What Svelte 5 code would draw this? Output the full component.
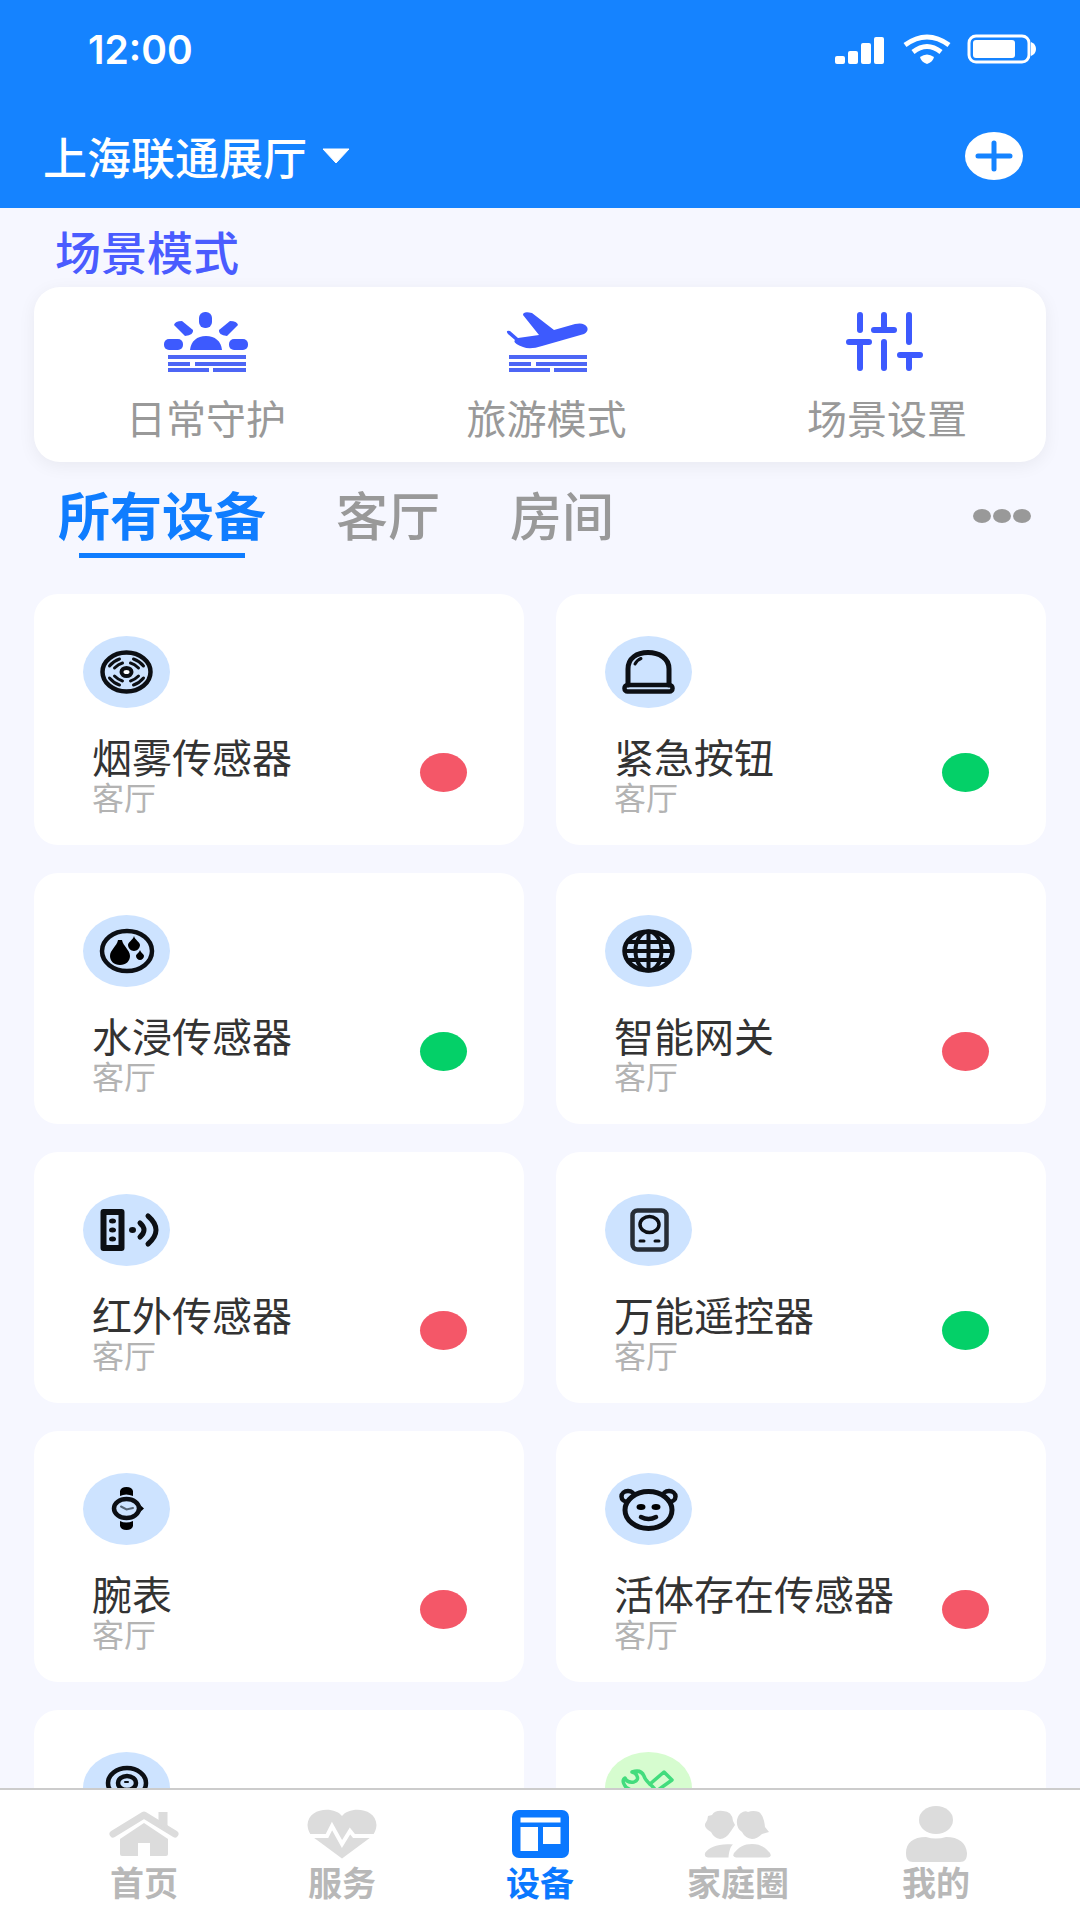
<script>
    let activeTab = 'all';
    let activePage = 'device';

    const tabs = [
        { id: 'all', title: '所有设备' },
        { id: 'living', title: '客厅' },
        { id: 'room', title: '房间' }
    ];

    const scenes = [
        { id: 'daily', title: '日常守护' },
        { id: 'travel', title: '旅游模式' },
        { id: 'settings', title: '场景设置' }
    ];

    const devices = [
        { id: 1, icon: 'smoke', name: '烟雾传感器', room: '客厅', online: false },
        { id: 2, icon: 'alarm', name: '紧急按钮', room: '客厅', online: true },
        { id: 3, icon: 'water', name: '水浸传感器', room: '客厅', online: true },
        { id: 4, icon: 'gateway', name: '智能网关', room: '客厅', online: false },
        { id: 5, icon: 'infrared', name: '红外传感器', room: '客厅', online: false },
        { id: 6, icon: 'remote', name: '万能遥控器', room: '客厅', online: true },
        { id: 7, icon: 'watch', name: '腕表', room: '客厅', online: false },
        { id: 8, icon: 'presence', name: '活体存在传感器', room: '客厅', online: false },
        { id: 9, icon: 'camera' },
        { id: 10, icon: 'tools' }
    ];

    const pages = [
        { id: 'home', title: '首页' },
        { id: 'service', title: '服务' },
        { id: 'device', title: '设备' },
        { id: 'family', title: '家庭圈' },
        { id: 'me', title: '我的' }
    ];
</script>

<div class="app">
    <header>
        <div class="status-bar">
            <span class="time">12:00</span>
            <svg class="status-icons" width="202" height="30" viewBox="0 0 202 30" fill="#fff" aria-hidden="true">
                <rect x="1" y="22" width="10" height="8" rx="2" />
                <rect x="14" y="17" width="10" height="13" rx="2" />
                <rect x="27" y="9" width="10" height="21" rx="2" />
                <rect x="40" y="3" width="10" height="27" rx="2" />
                <g fill="none" stroke="#fff" stroke-width="5">
                    <path d="M71 11Q93 -5 115 11" />
                    <path d="M79 18Q93 7 107 18" />
                </g>
                <path d="M86 23Q93 18 100 23Q99 28 93 30Q87 28 86 23Z" />
                <rect x="135" y="2" width="60" height="26" rx="7" fill="none" stroke="#fff" stroke-width="3" />
                <rect x="139" y="6" width="42" height="18" rx="3" />
                <path d="M197 8Q202 10 202 15T197 22Z" />
            </svg>
        </div>
        <div class="title-bar">
            <button class="location">
                上海联通展厅
                <svg width="28" height="16" viewBox="0 0 28 16" aria-hidden="true">
                    <path d="M1 1H27L14 15Z" fill="#fff" stroke="#fff" stroke-linejoin="round" />
                </svg>
            </button>
            <button class="add" aria-label="添加">
                <svg width="58" height="48" viewBox="0 0 58 48">
                    <ellipse cx="29" cy="24" rx="29" ry="24" fill="#fff" />
                    <path d="M29 11V37M13 24H45" stroke="#1583ff" stroke-width="5" stroke-linecap="round" />
                </svg>
            </button>
        </div>
    </header>

    <main>
        <h2>场景模式</h2>
        <section class="scenes">
            {#each scenes as scene (scene.id)}
                <button class="scene">
                    <svg width="84" height="60" viewBox="0 0 84 60" fill="#3d5afe" aria-hidden="true">
                        {#if scene.id === 'daily'}
                            <rect x="35" y="0" width="13" height="16" rx="6" />
                            <path d="M10 13Q11 9 18 9L29 18Q30 23 21 24Z" />
                            <path d="M74 13Q73 9 66 9L55 18Q54 23 63 24Z" />
                            <rect x="0" y="27" width="19" height="11" rx="5" />
                            <rect x="65" y="27" width="19" height="11" rx="5" />
                            <path d="M26 38C27 29 33 24 42 24S57 29 58 38Z" />
                        {:else if scene.id === 'travel'}
                            <path d="M18 3Q18 -1 27 1L49 18L70 12Q79 10 82 15Q84 19 79 22L37 34Q25 38 18 35Q7 31 10 28L3 22Q0 18 5 19L13 26L34 23Z" />
                        {/if}
                        {#if scene.id === 'settings'}
                            <g fill="none" stroke="#3d5afe" stroke-width="6" stroke-linecap="round">
                                <path d="M15 3V18M15 30V56M4 30H24" />
                                <path d="M39 3V18M39 30V56M29 18H49" />
                                <path d="M64 3V30M64 43V56M55 43H75" />
                            </g>
                        {:else}
                            <path d="M4 45H82M4 52H26M31 52H82M4 58H45M49 58H82" fill="none" stroke="#4d66f5" stroke-width="4" />
                        {/if}
                    </svg>
                    <span>{scene.title}</span>
                </button>
            {/each}
        </section>

        <div class="tabs">
            {#each tabs as tab (tab.id)}
                <button class="tab" class:active={activeTab === tab.id} on:click={() => (activeTab = tab.id)}>
                    {tab.title}
                </button>
            {/each}
            <button class="more" aria-label="更多">
                <svg width="60" height="16" viewBox="0 0 60 16" fill="#999">
                    <ellipse cx="10" cy="8" rx="9" ry="7" />
                    <ellipse cx="30" cy="8" rx="9" ry="7" />
                    <ellipse cx="50" cy="8" rx="9" ry="7" />
                </svg>
            </button>
        </div>

        <ul class="devices">
            {#each devices as device (device.id)}
                <li>
                    <svg class="device-icon" width="87" height="72" viewBox="0 0 87 72" fill="none" stroke="#0c0f14" stroke-width="4.5" stroke-linecap="round" aria-hidden="true">
                        <ellipse cx="43.5" cy="36" rx="43.5" ry="36" stroke="none" fill={device.icon === 'tools' ? '#d6fccf' : '#cde3ff'} />
                        {#if device.icon === 'smoke'}
                            <ellipse cx="43.5" cy="36" rx="24" ry="19.5" />
                            <ellipse cx="43.5" cy="36" rx="5" ry="4" fill="#fff" stroke-width="4" />
                            {#each ['1 1', '-1 1', '1 -1', '-1 -1'] as flip}
                                <g transform="translate(43.5 36) scale({flip})" stroke-width="3">
                                    <path d="M7 13Q13 11 17 6" />
                                    <path d="M4 9Q8 8 12 4" />
                                </g>
                            {/each}
                        {:else if device.icon === 'alarm'}
                            <path d="M23 49V33C23 22 32 16.5 43 16.5S64 22 64 33V49" stroke-width="5" />
                            <rect x="19.5" y="49" width="48" height="6.5" rx="3" />
                            <path d="M30 28Q32 24 36 22.5" stroke-width="3" />
                        {:else if device.icon === 'water'}
                            <ellipse cx="44" cy="36" rx="25" ry="20" />
                            <g fill="#000" stroke="none">
                                <path d="M35 25H39C40 31 47 35 47 41C47 46 43 50 37 50S27 46 27 41C27 35 34 31 35 25Z" />
                                <path d="M51 21C52 25 57 27 57 30C57 33 54 36 51 36S45 33 45 30C45 27 50 25 51 21Z" />
                                <path d="M57 35C58 38 61 39 61 41S59 45 57 45S53 43 53 41S56 38 57 35Z" />
                            </g>
                        {:else if device.icon === 'gateway'}
                            <ellipse cx="43.5" cy="36" rx="24" ry="19.5" />
                            <ellipse cx="43.5" cy="36" rx="13" ry="19.5" stroke-width="4" />
                            <path d="M43.5 17V55M20 36H67M23 27H64M23 45H64" stroke-width="4" />
                        {:else if device.icon === 'infrared'}
                            <rect x="20.5" y="18" width="18" height="36" stroke-width="6" stroke-linejoin="round" />
                            <g fill="#0c0f14" stroke="none">
                                <ellipse cx="29.5" cy="27" rx="3.5" ry="2.5" />
                                <ellipse cx="29.5" cy="36" rx="3.5" ry="2.5" />
                                <ellipse cx="29.5" cy="45" rx="3.5" ry="2.5" />
                                <ellipse cx="49.5" cy="36" rx="3.5" ry="3" />
                            </g>
                            <path d="M57 29Q65 36 57 43M65 22Q81 36 65 50" stroke-width="5" />
                        {:else if device.icon === 'remote'}
                            <rect x="27.5" y="16.5" width="34" height="39" rx="5" stroke="#262d36" />
                            <ellipse cx="44.5" cy="30.5" rx="9.5" ry="8" stroke-width="3.5" />
                            <path d="M35 47H39M50 47H54" stroke-width="3" />
                        {:else if device.icon === 'watch'}
                            <g fill="#000" stroke="none">
                                <path d="M37 23V18Q38 14 43.500 14T50 18V23Q43 20 37 23Z" />
                                <path d="M37 48V53Q38 57 43.500 57T50 53V48Q43 51 37 48Z" />
                                <path d="M55 30L61 35.5L55 41Z" />
                            </g>
                            <ellipse cx="43.5" cy="35.5" rx="12.5" ry="9.5" />
                            <path d="M38 33.5L43.5 36.5L50 35" stroke="#566575" stroke-width="2" />
                        {:else if device.icon === 'presence'}
                            <ellipse cx="23" cy="23.5" rx="6.5" ry="5.5" />
                            <ellipse cx="64" cy="23.5" rx="6.5" ry="5.5" />
                            <ellipse cx="43.5" cy="37" rx="23.5" ry="18.5" fill="#cde3ff" stroke-width="5" />
                            <ellipse cx="36" cy="34" rx="4.5" ry="3" fill="#000" stroke="none" />
                            <ellipse cx="51" cy="34" rx="4.5" ry="3" fill="#000" stroke="none" />
                            <path d="M36 44Q43.5 48 51 44" />
                        {:else if device.icon === 'camera'}
                            <ellipse cx="44" cy="31" rx="19" ry="15" />
                            <ellipse cx="44" cy="31" rx="9" ry="7" />
                            <path d="M42 30H45" stroke-width="2" />
                            <path d="M32 45L28 56H60L56 45" />
                        {:else}
                            <g stroke="#43dc7d" stroke-width="3.5" stroke-linejoin="round">
                                <path d="M27 20Q36 17 39 24Q40 28 47 34L60 48L54 54L36 38Q22 40 19 32Q17 28 20 26Q22 31 29 30Q34 28 32 24Q31 21 27 20Z" />
                                <path d="M45 32L59 20L67 28L53 38" />
                            </g>
                        {/if}
                    </svg>
                    {#if device.name}
                        <div class="device-info">
                            <div>
                                <h3>{device.name}</h3>
                                <p>{device.room}</p>
                            </div>
                            <span class="state" class:online={device.online} role="img" aria-label={device.online ? '在线' : '离线'}></span>
                        </div>
                    {/if}
                </li>
            {/each}
        </ul>
    </main>

    <nav>
        {#each pages as page (page.id)}
            <button class="page" class:active={activePage === page.id} on:click={() => (activePage = page.id)}>
                <svg width="70" height="60" viewBox="0 0 70 60" fill="currentColor" aria-hidden="true">
                    {#if page.id === 'home'}
                        <path d="M4 31L35 12L66 31" fill="none" stroke="currentColor" stroke-width="7" stroke-linecap="round" stroke-linejoin="round" />
                        <path d="M49.5 9H58.5V27L49.5 21Z" />
                        <path d="M35 20L59 36V51Q59 53 57 53H41V40H29V53H13Q11 53 11 51V36Z" />
                    {:else if page.id === 'service'}
                        <path d="M35 13C42 3 69 4 69.5 22C69 29 66 33 60 37L35 55.5L10 37C4 33 1 29 .5 22C1 4 28 3 35 13Z" />
                        <path d="M2 33H20L25 23L35 41L43 28L47 33H68" fill="none" stroke="#fff" stroke-width="4" />
                    {:else if page.id === 'device'}
                        <rect x="7" y="7" width="57" height="48" rx="7" />
                        <path d="M15.5 14.5H55.5V19.5H15.5ZM15.5 24H33V48H15.5ZM38 24H55.5V41H38Z" fill="#fff" />
                    {:else if page.id === 'family'}
                        <path d="M5 13L9 12Q12 7 20 8Q29 8 30 18L32 22L28 28Q23 36 17 36Q11 35 8 29Q1 25 2 21Q5 17 5 13Z" />
                        <path d="M38 10Q42 7 45 9Q50 7 56 9Q61 13 62 24L66 29L59 31Q54 36 49 36Q42 35 39 29Q33 25 34 17Q35 12 38 10Z" />
                        <path d="M2 50C6 44 16 40 30 41.5C27 44 26 49 25.5 54.5H5Q1 54 2 50Z" />
                        <path d="M31 50C36 44 41 41 49 41S62 44 67 50Q69 54 65 54.5H33Q29 54 31 50Z" />
                    {:else}
                        <ellipse cx="35" cy="17" rx="17" ry="14" />
                        <path d="M5 50C5 40 12 34 25 34Q35 37 45 34C58 34 65 40 66 50C66 56 64 59 59 59H12C7 59 5 56 5 50Z" />
                    {/if}
                </svg>
                <span>{page.title}</span>
            </button>
        {/each}
    </nav>
</div>

<style>
    :global(body) {
        margin: 0;
    }

    .app {
        display: flex;
        flex-direction: column;
        height: 100vh;
        background: #f6f7ff;
        font-family: "Noto Sans CJK SC", sans-serif;
    }

    button {
        padding: 0;
        border: none;
        background: none;
        font-family: inherit;
        cursor: pointer;
    }

    svg {
        display: block;
        flex: none;
    }

    h2, h3, p, ul {
        margin: 0;
        padding: 0;
    }

    header {
        background: #1583ff;
        color: #fff;
    }

    .status-bar {
        display: flex;
        align-items: center;
        justify-content: space-between;
        height: 98px;
        padding: 0 44px 0 88px;
    }

    .time {
        font-family: Inter, sans-serif;
        font-size: 39px;
        font-weight: 600;
    }

    .title-bar {
        display: flex;
        align-items: center;
        justify-content: space-between;
        height: 104px;
        padding: 6px 57px 0 43px;
    }

    .location {
        display: flex;
        align-items: center;
        gap: 15px;
        color: #fff;
        font-size: 44px;
        font-weight: 500;
        line-height: 48px;
    }

    main {
        flex: 1;
        min-height: 0;
        padding: 12px 34px 0;
        overflow: auto;
        scrollbar-width: none;
    }

    h2 {
        margin: 0 21px 7px;
        color: #4a5cff;
        font-size: 46px;
        font-weight: 500;
        line-height: 60px;
    }

    .scenes {
        display: flex;
        justify-content: space-between;
        padding: 25px 79px 20px 92px;
        border-radius: 26px;
        background: #fff;
        box-shadow: 0 4px 18px rgba(0, 0, 0, 0.06);
    }

    .scene {
        display: flex;
        flex-direction: column;
        align-items: center;
        gap: 20px;
        color: #999;
        font-size: 40px;
        line-height: 50px;
    }

    .tabs {
        display: flex;
        align-items: flex-start;
        gap: 70px;
        margin: 24px 14px 36px 24px;
    }

    .tab {
        color: #999;
        font-size: 52px;
        font-weight: 500;
        line-height: 56px;
    }

    .tab::after {
        content: "";
        display: block;
        width: 80%;
        height: 5px;
        margin: 11px auto 0;
    }

    .tab.active {
        color: #0f7dff;
        font-weight: 700;
    }

    .tab.active::after {
        background: #0f7dff;
    }

    .more {
        margin: 22px 0 0 auto;
    }

    .devices {
        display: grid;
        grid-template-columns: 1fr 1fr;
        gap: 28px 32px;
        list-style: none;
    }

    li {
        box-sizing: border-box;
        min-height: 251px;
        padding: 42px 57px 0 49px;
        border-radius: 24px;
        background: #fff;
    }

    .device-info {
        display: flex;
        align-items: center;
        justify-content: space-between;
        margin-top: 28px;
        padding-left: 9px;
    }

    h3 {
        color: #333;
        font-size: 40px;
        font-weight: 400;
        line-height: 40px;
    }

    p {
        color: #b3b3b3;
        font-size: 32px;
        font-weight: 400;
        line-height: 40px;
    }

    .state {
        flex: none;
        width: 47px;
        height: 39px;
        margin-bottom: 8px;
        border-radius: 50%;
        background: #f45768;
    }

    .state.online {
        background: #04d068;
    }

    nav {
        display: flex;
        padding: 13px 45px 19px;
        border-top: 2px solid #ccc;
        background: #fff;
    }

    .page {
        display: flex;
        flex: 1;
        flex-direction: column;
        align-items: center;
        color: #dcdcdc;
        font-size: 34px;
        font-weight: 700;
        line-height: 38px;
    }

    .page span {
        color: #b8b8b8;
    }

    .page.active,
    .page.active span {
        color: #0a78ff;
    }
</style>
